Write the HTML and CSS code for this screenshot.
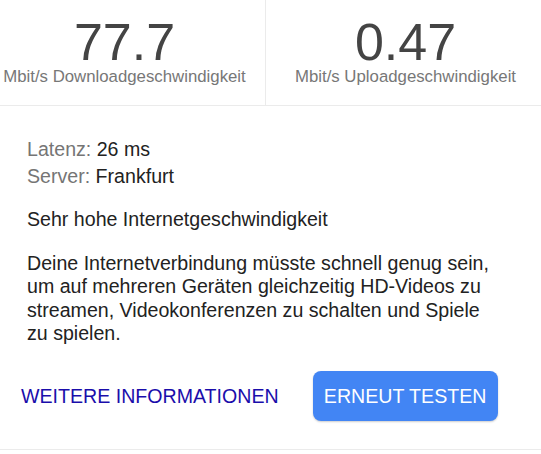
FILE: index.html
```html
<!DOCTYPE html>
<html lang="de">
<head>
<meta charset="utf-8">
<title>Speedtest</title>
<link rel="stylesheet" href="styles.css">
</head>
<body>
<div class="card">
  <div class="stats">
    <div class="stat stat-down">
      <div class="value">77.7</div>
      <div class="unit">Mbit/s Downloadgeschwindigkeit</div>
    </div>
    <div class="stat stat-up">
      <div class="value">0.47</div>
      <div class="unit">Mbit/s Uploadgeschwindigkeit</div>
    </div>
  </div>
  <div class="details">
    <div class="meta"><span class="meta-key">Latenz:</span> 26 ms</div>
    <div class="meta"><span class="meta-key">Server:</span> Frankfurt</div>
    <div class="headline">Sehr hohe Internetgeschwindigkeit</div>
    <p class="desc">Deine Internetverbindung müsste schnell genug sein, um auf mehreren Geräten gleichzeitig HD-Videos zu streamen, Videokonferenzen zu schalten und Spiele zu spielen.</p>
    <div class="actions">
      <a class="link" href="#">WEITERE INFORMATIONEN</a>
      <button class="btn" type="button">ERNEUT TESTEN</button>
    </div>
  </div>
</div>
</body>
</html>
```
FILE: styles.css
```css
html, body {
  margin: 0;
  padding: 0;
  background: #fff;
}
body {
  font-family: "Liberation Sans", Arial, sans-serif;
  color: #222;
}
.card {
  width: 541px;
}
.stats {
  display: flex;
  border-bottom: 1px solid #ebebeb;
}
.stat {
  display: flex;
  flex-direction: column;
  align-items: center;
  padding-top: 20px;
  padding-bottom: 19px;
}
.stat-down {
  width: 249px;
  padding-right: 16px;
  border-right: 1px solid #ebebeb;
}
.stat-up {
  flex: 1;
  padding-left: 4px;
}
.value {
  font-size: 52px;
  line-height: 44px;
  color: #444;
}
.unit {
  margin-top: 3px;
  font-size: 16.8px;
  line-height: 19px;
  color: #777;
}
.details {
  padding: 29.5px 0 28px 27px;
  border-bottom: 1px solid #ebebeb;
}
.meta {
  font-size: 19.6px;
  line-height: 27.5px;
  color: #222;
}
.meta-key {
  color: #757575;
}
.headline {
  margin-top: 17px;
  font-size: 19.6px;
  line-height: 23.5px;
}
.desc {
  margin: 20.5px 0 0 0;
  font-size: 19.6px;
  line-height: 23.5px;
  width: 465px;
}
.actions {
  display: flex;
  align-items: center;
  margin-top: 25.5px;
  margin-left: -6px;
  gap: 34px;
}
.link {
  font-size: 19.6px;
  color: #1a0dab;
  text-decoration: none;
}
.btn {
  font-family: "Liberation Sans", Arial, sans-serif;
  font-size: 19.6px;
  line-height: 50px;
  height: 50px;
  width: 185px;
  padding: 0;
  border: none;
  border-radius: 8px;
  background: #4285f4;
  color: #fff;
  box-shadow: 0 1px 2px rgba(0, 0, 0, 0.2);
}
```
